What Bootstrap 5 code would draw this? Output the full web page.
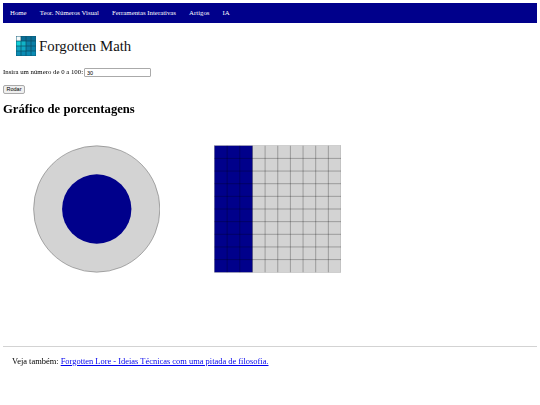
<!DOCTYPE html>
<html lang="pt">
<head>
<meta charset="utf-8">
<title>Forgotten Math</title>
<link href="https://cdn.jsdelivr.net/npm/bootstrap@5.3.0/dist/css/bootstrap.min.css" rel="stylesheet">
<style>
html,body{height:100%}
body{background:#fff;color:#000;font-family:"Liberation Serif","Times New Roman",serif;font-size:6.8px;line-height:1.15;padding:3px}
.fm-nav{background:#00008b;height:20px;padding:0;border:0}
.fm-nav .nav-link{color:#fff;font-size:6.8px;padding:0;line-height:20px;margin-left:7px;margin-right:6.1px;white-space:nowrap}
.fm-brand{padding:13px 0 0 13px;height:45px;gap:3px}
.fm-brand span{font-size:14.8px;line-height:20px;color:#111}
.fm-form{height:16.5px;gap:1px}
.fm-form label,.fm-foot,.fm-title{will-change:transform}
.fm-input{width:67px;height:9px;font:5.5px "Liberation Sans",Arial,sans-serif;border:.7px solid #aaa;border-radius:1px;padding:0 2px;color:#000;background:#fff}
.fm-run{font:5.5px "Liberation Sans",Arial,sans-serif;height:9px;width:22px;padding:0;margin-top:0;color:#000;background:#efefef;border:.7px solid #aaa;border-radius:2px;display:block}
.fm-title{font-size:12.65px;font-weight:700;line-height:16px;margin:7.5px 0 0;color:#000}
.fm-charts{margin-top:27.5px;gap:53.5px;padding-left:29.7px}
.fm-charts svg{display:block;width:127.5px;height:128px;flex:none}
.fm-rule{margin:73.5px 0 0;border:0;border-top:1px solid #d3d3d3;opacity:1}
.fm-foot{font-size:8.44px;padding:8.5px 0 0 9px;line-height:10px}
.fm-foot a{color:#0000ee;text-decoration:underline}
</style>
</head>
<body>
<nav class="navbar fm-nav">
  <div class="nav">
    <a class="nav-link" href="#">Home</a>
    <a class="nav-link" href="#">Teor. Números Visual</a>
    <a class="nav-link" href="#">Ferramentas Interativas</a>
    <a class="nav-link" href="#">Artigos</a>
    <a class="nav-link" href="#">IA</a>
  </div>
</nav>
<div class="d-flex align-items-start fm-brand">
  <svg width="20" height="20" viewBox="0 0 20 20" aria-hidden="true">
    <rect width="20" height="20" fill="#0a7fa6"/>
    <rect width="5" height="5" fill="#f4f8f8"/>
    <rect y="5" width="5" height="5" fill="#12d0d8"/><rect x="5" y="5" width="5" height="5" fill="#10b4c8"/>
    <rect x="5" width="15" height="5" fill="#0a6f96"/>
    <rect x="10" y="5" width="10" height="5" fill="#0a7fa6"/>
    <rect y="10" width="10" height="5" fill="#0fa8c4"/>
    <rect y="15" width="20" height="5" fill="#0a8cb4"/>
    <path d="M5 0V20M10 0V20M15 0V20M0 5H20M0 10H20M0 15H20" stroke="#0b4a63" stroke-width=".7" fill="none"/>
    <rect x=".2" y=".2" width="19.6" height="19.6" fill="none" stroke="#0b5a78" stroke-width=".5"/>
  </svg>
  <span>Forgotten Math</span>
</div>
<form onsubmit="return false">
  <div class="d-flex align-items-start fm-form">
    <label for="n">Insira um número de 0 a 100:</label>
    <input id="n" class="fm-input" type="text" value="30">
  </div>
  <button class="fm-run" type="button">Rodar</button>
</form>
<h2 class="fm-title">Gráfico de porcentagens</h2>
<div class="d-flex fm-charts">
  <svg viewBox="0 0 128 128" role="img" aria-label="Círculo">
    <circle cx="64" cy="64" r="63.4" fill="#d3d3d3" stroke="#777" stroke-width=".6"/>
    <circle cx="64" cy="64" r="34.8" fill="#00008b"/>
  </svg>
  <svg viewBox="0 0 128 128" role="img" aria-label="Grade">
    <rect x=".5" y=".5" width="127" height="127" fill="#d3d3d3"/>
    <rect x=".5" y=".5" width="38.1" height="127" fill="#00008b"/>
    <path d="M13.2.5V127.5M25.9.5V127.5M38.6.5V127.5M51.3.5V127.5M64 .5V127.5M76.7.5V127.5M89.4.5V127.5M102.1.5V127.5M114.8.5V127.5M.5 13.2H127.5M.5 25.9H127.5M.5 38.6H127.5M.5 51.3H127.5M.5 64H127.5M.5 76.7H127.5M.5 89.4H127.5M.5 102.1H127.5M.5 114.8H127.5" stroke="#000" stroke-opacity=".45" stroke-width=".6" fill="none"/>
    <rect x=".5" y=".5" width="127" height="127" fill="none" stroke="#000" stroke-opacity=".3" stroke-width=".5"/>
  </svg>
</div>
<hr class="fm-rule">
<p class="fm-foot mb-0">Veja também: <a href="#">Forgotten Lore - Ideias Técnicas com uma pitada de filosofia.</a></p>
</body>
</html>
